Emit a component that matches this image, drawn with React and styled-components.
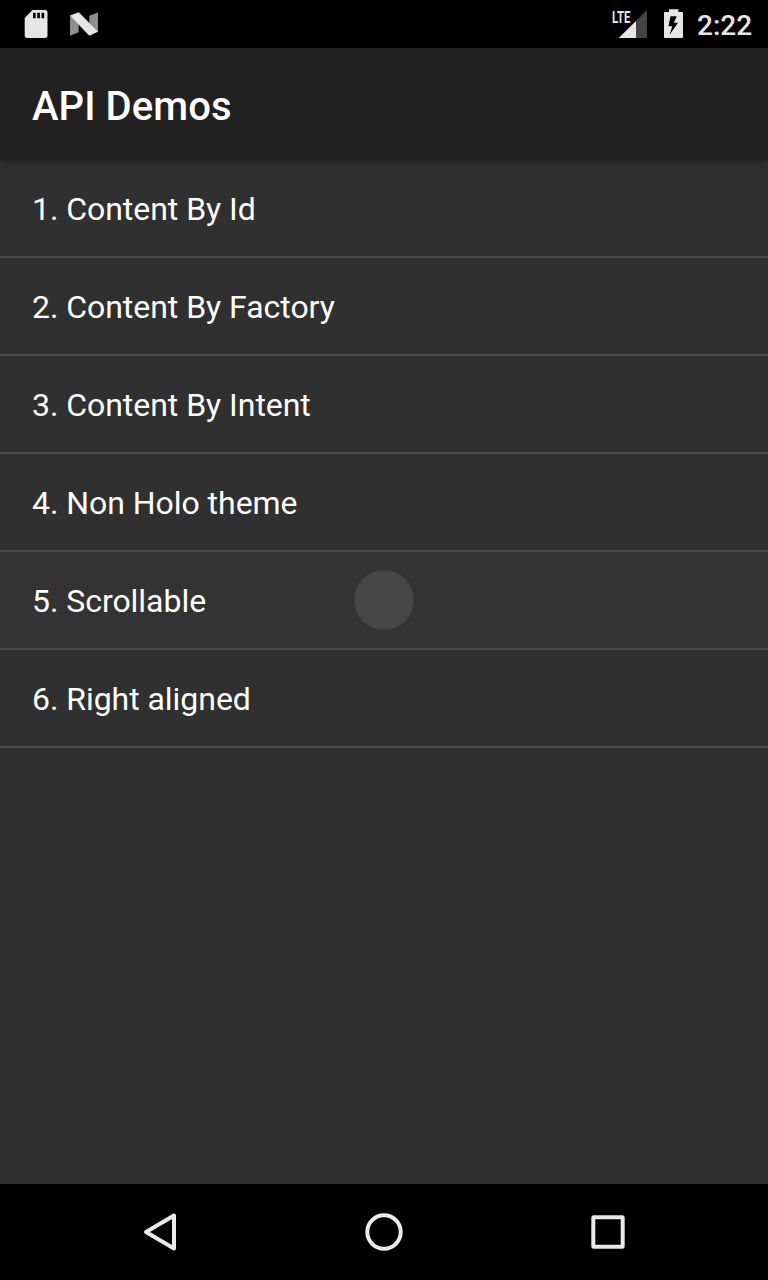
import React from "react";
import styled, { createGlobalStyle } from "styled-components";

const GlobalStyle = createGlobalStyle`
  body {
    margin: 0;
    background: #303030;
    font-family: Roboto, "Liberation Sans", sans-serif;
  }
`;

const Screen = styled.div`
  display: flex;
  flex-direction: column;
  width: 768px;
  height: 1280px;
  background: #303030;
  color: #fff;
  overflow: hidden;
`;

const StatusBar = styled.header`
  display: flex;
  justify-content: space-between;
  flex: 0 0 48px;
  padding: 0 16px 0 20px;
  background: #000;
`;

const StatusGroup = styled.div`
  display: flex;
  height: 48px;
`;

const Glyph = styled.svg`
  display: block;
  flex: none;
`;

const Clock = styled.time`
  width: 55px;
  margin-left: 9px;
  font-size: 28px;
  font-weight: 500;
  line-height: 52px;
  white-space: nowrap;
  color: #e6e6e6;
`;

const ActionBar = styled.div`
  display: flex;
  align-items: center;
  flex: 0 0 112px;
  box-sizing: border-box;
  padding: 6px 32px 0;
  background: #212121;
  box-shadow: 0 2px 6px rgba(0, 0, 0, 0.35);
  z-index: 1;
`;

const Title = styled.h1`
  margin: 0;
  font-size: 40px;
  line-height: 48px;
  font-weight: 500;
  letter-spacing: 0.07px;
`;

const List = styled.ul`
  flex: 1;
  margin: 0;
  padding: 0;
  list-style: none;
`;

const Row = styled.li`
  position: relative;
  display: flex;
  align-items: center;
  box-sizing: border-box;
  height: 98px;
  padding: 2px 32px 0;
  border-bottom: 2px solid #4a4a4a;
  background: ${({ $pressed }) => ($pressed ? "#333333" : "transparent")};
  font-size: 32px;
  line-height: 38px;
  letter-spacing: -0.04px;
`;

const Ripple = styled.span`
  position: absolute;
  left: 50%;
  top: 50%;
  width: 60px;
  height: 60px;
  border-radius: 50%;
  background: #464646;
  transform: translate(-50%, -50%);
`;

const NavBar = styled.nav`
  display: flex;
  justify-content: center;
  gap: 128px;
  flex: 0 0 96px;
  background: #000;
`;

const NavButton = styled.button`
  width: 96px;
  height: 96px;
  padding: 0;
  border: 0;
  background: none;
  color: #eaeaea;
`;

const items = [
  "1. Content By Id",
  "2. Content By Factory",
  "3. Content By Intent",
  "4. Non Holo theme",
  "5. Scrollable",
  "6. Right aligned",
];

const navStroke = { fill: "none", stroke: "currentColor", strokeWidth: 4, strokeLinejoin: "round" };

export default function App() {
  return (
    <Screen>
      <GlobalStyle />
      <StatusBar>
        <StatusGroup>
          <Glyph width="44" height="48" viewBox="20 0 44 48">
            <path
              fill="#e6e6e6"
              fillRule="evenodd"
              d="M32.5 10H45a2.5 2.5 0 0 1 2.5 2.5v23A2.5 2.5 0 0 1 45 38H27.2a2.5 2.5 0 0 1-2.5-2.5V18zM33 12.7v5.6h2.7v-5.6zM37.2 12.7v5.6h2.7v-5.6zM41.5 12.7v5.6h2.7v-5.6z"
            />
          </Glyph>
          <Glyph width="40" height="48" viewBox="64 0 40 48">
            <path fill="#8f8f8f" d="M70 15.5 78.7 24v8.300l-8.700 3.500zM98 12.500v20L89.300 24v-8.300z" />
            <path fill="#e6e6e6" d="M70 15.600 78.700 12.200 98 31.800 89.300 35.800z" />
          </Glyph>
        </StatusGroup>
        <StatusGroup>
          <Glyph width="44" height="48" viewBox="608 0 44 48">
            <path fill="#454545" d="M647 10v28h-11V21z" />
            <path fill="#e6e6e6" d="M636 21v17h-17.3z" />
            <text
              x="612"
              y="22.8"
              fill="#e6e6e6"
              fontSize="17"
              fontWeight="700"
              textLength="18.3"
              lengthAdjust="spacingAndGlyphs"
            >
              LTE
            </text>
          </Glyph>
          <Glyph width="36" height="48" viewBox="652 0 36 48">
            <path
              fill="#e6e6e6"
              fillRule="evenodd"
              d="M669 9.300h9.300V12h3.700a1 1 0 0 1 1 1V37a1 1 0 0 1-1 1h-17a1 1 0 0 1-1-1v-24a1 1 0 0 1 1-1H669zM670.500 16.300l-2 10h3.800l-2.800 8.700 8.500-12.200h-4.200l3-6.500z"
            />
          </Glyph>
          <Clock>2:22</Clock>
        </StatusGroup>
      </StatusBar>
      <ActionBar>
        <Title>API Demos</Title>
      </ActionBar>
      <List>
        {items.map((label, i) => (
          <Row key={label} $pressed={i === 4}>
            {label}
            {i === 4 && <Ripple />}
          </Row>
        ))}
      </List>
      <NavBar>
        <NavButton aria-label="Back">
          <Glyph width="96" height="96" viewBox="112 1184 96 96">
            <path {...navStroke} d="M146 1232 174 1215.5v33z" />
          </Glyph>
        </NavButton>
        <NavButton aria-label="Home">
          <Glyph width="96" height="96" viewBox="336 1184 96 96">
            <circle {...navStroke} cx="384" cy="1232" r="16.7" />
          </Glyph>
        </NavButton>
        <NavButton aria-label="Overview">
          <Glyph width="96" height="96" viewBox="560 1184 96 96">
            <rect {...navStroke} x="593.3" y="1217.3" width="29.4" height="29.4" rx="0.5" />
          </Glyph>
        </NavButton>
      </NavBar>
    </Screen>
  );
}
